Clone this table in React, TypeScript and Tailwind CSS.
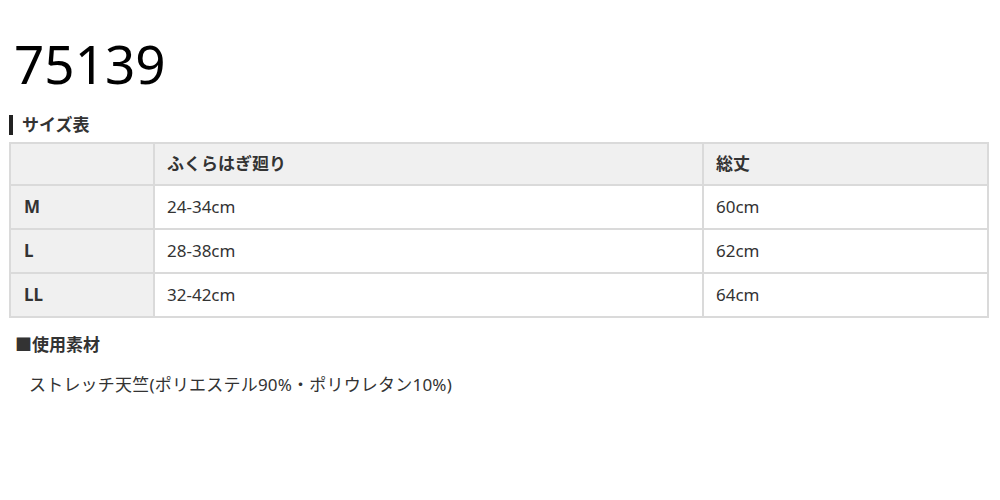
const rows = [
  { size: "M", calf: "24-34cm", length: "60cm" },
  { size: "L", calf: "28-38cm", length: "62cm" },
  { size: "LL", calf: "32-42cm", length: "64cm" },
];

const font = {
  fontFamily: '"Noto Sans", "Noto Sans CJK JP", sans-serif',
};

export default function App() {
  return (
    <div className="w-[1000px] h-[500px] bg-white text-[#333]" style={font}>
      <div className="pl-[14px] pt-[33px] h-[110px]">
        <h1 className="text-[53px] leading-[62px] text-black">75139</h1>
      </div>

      <div className="px-[9px]">
        <div className="flex items-center h-[32px] pb-[2px]">
          <span className="w-[4px] h-[20px] bg-[#222] mr-[9px]" />
          <span className="text-[17px] font-bold text-[#333]">サイズ表</span>
        </div>

        <table className="w-[980px] border-collapse text-[17px]">
          <thead>
            <tr className="h-[42px] bg-[#f0f0f0]">
              <th className="w-[144px] border-2 border-[#dadada]" />
              <th className="w-[549px] border-2 border-[#dadada] text-left font-bold pl-[12px]">
                ふくらはぎ廻り
              </th>
              <th className="border-2 border-[#dadada] text-left font-bold pl-[12px]">
                総丈
              </th>
            </tr>
          </thead>
          <tbody>
            {rows.map((r) => (
              <tr key={r.size} className="h-[44px]">
                <td className="bg-[#f0f0f0] border-2 border-[#dadada] font-bold pl-[13px]">
                  {r.size}
                </td>
                <td className="border-2 border-[#dadada] pl-[12px]">{r.calf}</td>
                <td className="border-2 border-[#dadada] pl-[12px]">{r.length}</td>
              </tr>
            ))}
          </tbody>
        </table>

        <div className="pl-[6px] pt-[14px] text-[17px] font-bold text-[#333]">
          ■使用素材
        </div>
        <div className="pl-[20px] pt-[14px] text-[17px] text-[#333] tracking-[0.2px]">
          ストレッチ天竺(ポリエステル90%・ポリウレタン10%)
        </div>
      </div>
    </div>
  );
}
